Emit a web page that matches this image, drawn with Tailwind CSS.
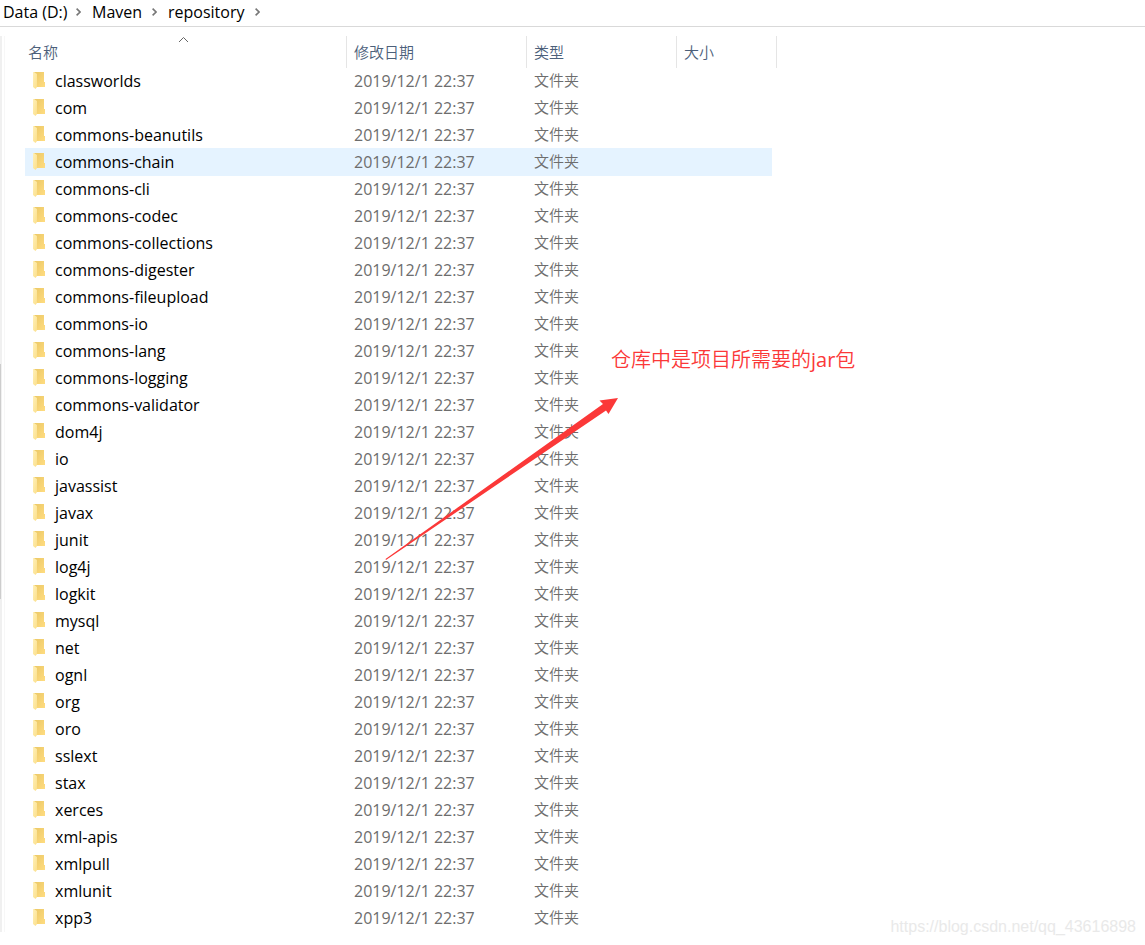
<!DOCTYPE html>
<html lang="zh-CN">
<head>
<meta charset="utf-8">
<meta name="viewport" content="width=device-width, initial-scale=1">
<title>repository</title>
<script src="https://cdn.jsdelivr.net/npm/@tailwindcss/browser@4"></script>
</head>
<body class="relative flex min-h-screen flex-col overflow-x-hidden bg-white font-['Open_Sans','Noto_Sans_CJK_SC',sans-serif] text-base text-black">
  <nav aria-label="路径" class="flex h-[27px] items-center border-b border-[#d9d9d9] pl-[3px] pb-0.5">
    <a href="#" class="w-[62px] whitespace-nowrap">Data (D:)</a>
    <svg class="mx-[11px] h-2 w-[5px]" viewBox="0 0 5 8" fill="none" stroke="#777" stroke-width="1.6" aria-hidden="true"><path d="M.6.6 4 4 .6 7.400"/></svg>
    <a href="#" class="w-[49px] whitespace-nowrap">Maven</a>
    <svg class="mx-[11px] h-2 w-[5px]" viewBox="0 0 5 8" fill="none" stroke="#777" stroke-width="1.6" aria-hidden="true"><path d="M.6.6 4 4 .6 7.400"/></svg>
    <a href="#" class="w-[76px] whitespace-nowrap">repository</a>
    <svg class="mx-[11px] h-2 w-[5px]" viewBox="0 0 5 8" fill="none" stroke="#777" stroke-width="1.6" aria-hidden="true"><path d="M.6.6 4 4 .6 7.400"/></svg>
  </nav>

  <main class="mt-[9px] mb-3 flex">
    <div class="w-0.5 shrink-0 bg-[#f0f0f0]"><div class="mt-[328px] h-[235px] w-px bg-[#cdcdcd]"></div></div>
    <div class="ml-0.5 w-px shrink-0 bg-[#f7f7f7]"></div>
    <table class="ml-5 w-[752px] table-fixed border-collapse text-left">
      <colgroup><col class="w-[322px]"><col class="w-[180px]"><col class="w-[150px]"><col class="w-[100px]"></colgroup>
      <thead>
        <tr class="h-8 text-[15px] text-[#4c607a]">
          <th class="relative p-0 font-[350] shadow-[inset_-1px_0_#e5e5e5]"><button class="block pl-[3px]">名称</button>
            <svg class="absolute top-0 left-[153px] h-[7px] w-[11px]" viewBox="0 0 11 7" fill="none" stroke="#666" aria-hidden="true"><path d="M1 6 5.500 1.500 10 6"/></svg>
          </th>
          <th class="p-0 font-[350] shadow-[inset_-1px_0_#e5e5e5]"><button class="block pl-[7px]">修改日期</button></th>
          <th class="p-0 font-[350] shadow-[inset_-1px_0_#e5e5e5]"><button class="block pl-[7px]">类型</button></th>
          <th class="p-0 font-[350] shadow-[inset_-1px_0_#e5e5e5]"><button class="block pl-[7px]">大小</button></th>
        </tr>
      </thead>
      <tbody id="files"></tbody>
    </table>
  </main>

  <svg class="pointer-events-none absolute top-[396px] left-[384px] h-[166px] w-[236px]" viewBox="384 396 236 166" fill="#fb3838" aria-hidden="true"><path d="M385.500 559 603 404 599.500 400.500 618 398 608.500 414 606 410.500 386 560Z"/></svg>
  <p class="absolute top-[346px] left-[611px] text-xl font-[350] whitespace-nowrap text-[#fb3838]">仓库中是项目所需要的<span class="font-normal">jar</span>包</p>
  <a href="#" class="absolute right-[9px] bottom-[6px] font-['Liberation_Sans',sans-serif] text-base text-[#e9e9e9]">https://blog.csdn.net/qq_43616898</a>

  <svg class="absolute size-0" aria-hidden="true">
    <defs>
      <linearGradient id="back" x1="0" y1="0" x2="1" y2="1"><stop offset="0" stop-color="#ebc866"/><stop offset="1" stop-color="#ffdc80"/></linearGradient>
      <linearGradient id="front" x1="0" y1="0" x2="1" y2="1"><stop offset="0" stop-color="#fff0b8"/><stop offset="1" stop-color="#fbdf8b"/></linearGradient>
    </defs>
  </svg>
  <script>
    const names = ["classworlds", "com", "commons-beanutils", "commons-chain", "commons-cli", "commons-codec", "commons-collections", "commons-digester", "commons-fileupload", "commons-io", "commons-lang", "commons-logging", "commons-validator", "dom4j", "io", "javassist", "javax", "junit", "log4j", "logkit", "mysql", "net", "ognl", "org", "oro", "sslext", "stax", "xerces", "xml-apis", "xmlpull", "xmlunit", "xpp3"];
    const hovered = "commons-chain";
    document.getElementById("files").innerHTML = names.map(name => {
      const fill = name === hovered ? "bg-[#e5f3ff] shadow-[0_-1px_#e5f3ff]" : "";
      return `<tr class="h-[27px] text-[#6d6d6d]">
        <td class="p-0 ${fill}"><a href="#" class="flex h-[27px] items-center pb-0.5 pl-2 text-black">
          <svg class="mr-[10px] mb-px h-[17px] w-3" viewBox="0 0 12 17" aria-hidden="true"><path fill="url(#back)" d="M1 0h10v10h1v5H3z"/><path fill="url(#front)" d="M0 0h1l3 2v13l-1.500 2L0 15z"/></svg>${name}</a></td>
        <td class="p-0 pb-0.5 pl-[7px] ${fill}">2019/12/1 22:37</td>
        <td class="p-0 pb-0.5 pl-[7px] text-[15px] font-[350] ${fill}">文件夹</td>
        <td class="p-0"><div class="mr-[5px] h-[27px] ${fill}"></div></td>
      </tr>`;
    }).join("");
  </script>
</body>
</html>
